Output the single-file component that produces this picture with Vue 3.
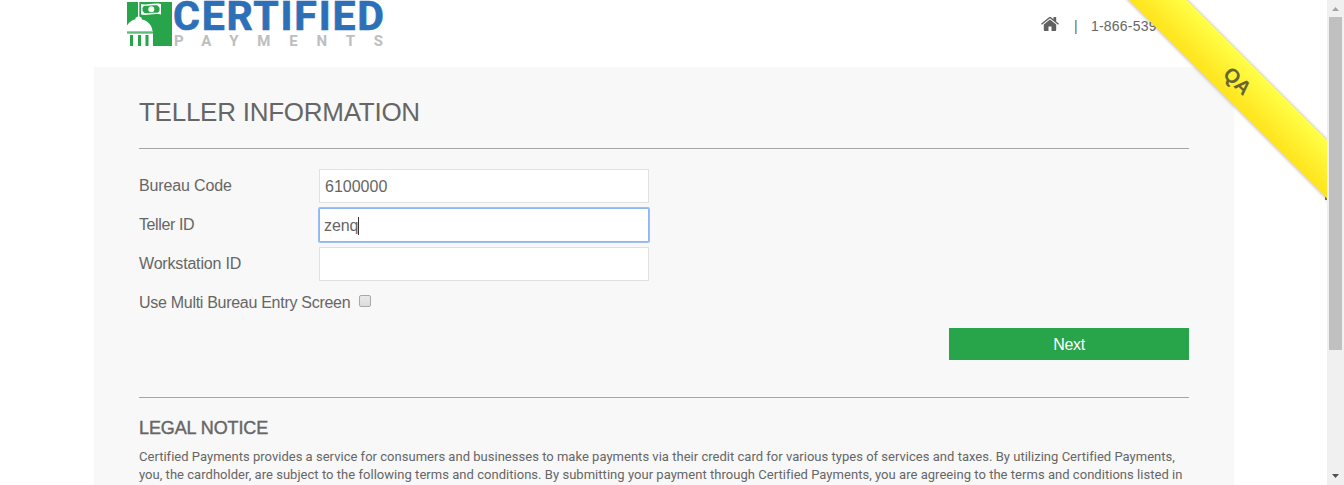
<script setup>
import { ref } from 'vue'

const fields = ref([
  { label: 'Bureau Code', value: '6100000', focused: false },
  { label: 'Teller ID', value: 'zenq', focused: true },
  { label: 'Workstation ID', value: '', focused: false },
])
</script>

<template>
  <div class="window">
    <div class="page">
      <header class="header">
        <svg class="logo" width="260" height="50" viewBox="0 0 260 50" aria-label="Certified Payments">
          <path fill="#28a44b" d="M1 2h45v44H1z" />
          <path fill="#fff" d="M1 31.500h26V46H1z" />
          <path fill="#28a44b" d="M1 32.200h26v1.300H1zM4 35h3v11H4zM12 35h3v11h-3zM19.500 35h3v11h-3z" />
          <path fill="#fff" d="M1 25.500C3 22 6 20 9.500 19.200v-1.400l2.500-1.300V2h1.300v14.500l2.300 1.300v1.400C21.500 20.500 26 25 26.500 31H1z" />
          <path fill="#fff" d="M15 4c6 1.500 12-1.500 20 0v10.500c-8-1.500-14 1.500-20 0z" />
          <path fill="#28a44b" d="M16.500 5.500c5 1 10-1 17 0V13c-7-1-12 1-17 0z" />
          <path fill="#fff" d="M16 5h3l-3 3zM31 5h3v3zM16 10.500v3h3zM34 10.500v3h-3z" />
          <circle cx="25.300" cy="9.200" r="3" fill="#fff" />
          <text class="brand" x="47" y="30" textLength="211">CERTIFIED</text>
          <text class="brand-sub" x="48" y="46" textLength="209">PAYMENTS</text>
        </svg>
        <div class="contact">
          <svg class="home" width="18" height="16" viewBox="0 0 18 16">
            <path fill="#606060" d="M9 3.400l6.200 5.200V14a1 1 0 0 1-1 1H10.500v-4.500h-3V15H3.800a1 1 0 0 1-1-1V8.600z" />
            <path fill="#606060" d="M0 7.800L8 1.200Q9 .4 10 1.200l2.500 2.100V1h2.700v4.500L18 7.800l-.9 1L9 2.200.9 8.800z" />
          </svg>
          <span class="divider">|</span>
          <span class="phone">1-866-539</span>
        </div>
      </header>

      <main class="panel">
        <h1>TELLER INFORMATION</h1>
        <form class="form" @submit.prevent>
          <div v-for="f in fields" :key="f.label" class="row">
            <label>{{ f.label }}</label>
            <div class="field" :class="{ focused: f.focused }"><span>{{ f.value }}</span><i v-if="f.focused" class="caret"></i></div>
          </div>
          <div class="row check">
            <label class="multi">Use Multi Bureau Entry Screen</label>
            <span class="box"></span>
          </div>
          <button class="next">Next</button>
        </form>
        <section class="legal">
          <h2>LEGAL NOTICE</h2>
          <p class="line first">Certified Payments provides a service for consumers and businesses to make payments via their credit card for various types of services and taxes. By utilizing Certified Payments,</p>
          <p class="line second">you, the cardholder, are subject to the following terms and conditions. By submitting your payment through Certified Payments, you are agreeing to the terms and conditions listed in</p>
        </section>
      </main>
      <div class="fold"></div>
      <div class="ribbon"><span>QA</span></div>
    </div>

    <aside class="scrollbar">
      <svg width="17" height="17"><path d="M5 11h7L8.500 7z" fill="#a3a3a3" /></svg>
      <div class="thumb"></div>
      <svg class="down" width="17" height="17"><path d="M5 6h7L8.500 10z" fill="#505050" /></svg>
    </aside>
  </div>
</template>

<style>
html, body { margin: 0; overflow: hidden; background: #fff; }
</style>

<style scoped>
* { box-sizing: border-box; }
.window {
  display: flex;
  width: 1344px;
  height: 485px;
  overflow: hidden;
  font-family: "Liberation Sans", Arial, sans-serif;
  color: #666;
}
.page { position: relative; width: 1327px; height: 485px; overflow: hidden; }
.header {
  display: flex;
  justify-content: space-between;
  height: 67px;
  margin-left: 94px;
  width: 1140px;
  padding-left: 32px;
}
.logo { overflow: visible; }
.brand { font-family: Roboto, sans-serif; font-size: 41px; font-weight: 700; fill: #2d70b7; stroke: #2d70b7; stroke-width: .7px; }
.brand-sub { font-family: Roboto, sans-serif; font-size: 15px; font-weight: 700; fill: #bcbec0; }
.contact { display: flex; align-items: flex-start; width: 193px; padding-top: 16px; font-size: 14px; }
.divider { margin: 1px 0 0 15px; width: 17px; line-height: 18px; }
.phone { line-height: 20px; letter-spacing: .2px; }
.panel {
  width: 1140px;
  height: 418px;
  margin-left: 94px;
  padding: 0 45px;
  background: #f8f8f8;
}
h1 {
  height: 82px;
  margin: 0;
  padding-top: 30px;
  border-bottom: 1px solid #a6a6a6;
  font-size: 26px;
  line-height: 31px;
  font-weight: 400;
  letter-spacing: -.26px;
  white-space: nowrap;
}
.form { display: flex; flex-direction: column; height: 248px; padding-top: 20px; }
.row { display: flex; height: 34px; margin-bottom: 5px; font-size: 16px; }
.row label { width: 180px; line-height: 33px; white-space: nowrap; letter-spacing: -.25px; }
.row:first-child label { letter-spacing: -.15px; }
.row:nth-child(2) label { letter-spacing: -.4px; }
.row:nth-child(3) label { letter-spacing: -.18px; }
.field {
  display: flex;
  align-items: center;
  width: 330px;
  height: 34px;
  padding: 1px 0 0 5px;
  border: 1px solid #e1e1e1;
  background: #fff;
}
.focused { padding-left: 4px; border-color: #8fb5f5; box-shadow: 0 0 0 1px #9dbff7; border-radius: 1px; }
.focused span { letter-spacing: -.1px; }
.caret { width: 1px; height: 18px; background: #333; }
.row .multi { width: 220px; letter-spacing: -.29px; }
.box {
  width: 12px;
  height: 12px;
  margin-top: 9px;
  border: 1px solid #a9a9a9;
  border-radius: 2px;
  background: linear-gradient(#e9e9e9, #dcdcdc);
}
.next {
  align-self: flex-end;
  width: 240px;
  height: 32px;
  margin-top: 3px;
  padding: 0;
  border: 0;
  background: #28a44b;
  color: #fff;
  font: 16px/34px "Liberation Sans", Arial, sans-serif;
  letter-spacing: -.3px;
}
.legal { border-top: 1px solid #a6a6a6; padding-top: 19px; }
h2 {
  margin: 0 0 9px;
  font-size: 18px;
  line-height: 22px;
  font-weight: 400;
  letter-spacing: -.1px;
  -webkit-text-stroke: .4px #666;
}
.line {
  margin: 0;
  font-family: Roboto, sans-serif;
  font-size: 13px;
  line-height: 18px;
  letter-spacing: .035px;
  white-space: nowrap;
}
.first { letter-spacing: .02px; }
.fold { position: absolute; left: 1325px; top: 196px; width: 2px; height: 4px; background: #6b8e10; }
.ribbon {
  position: absolute;
  left: 1037.500px;
  top: 59.500px;
  width: 400px;
  height: 41px;
  transform: rotate(45deg);
  background: linear-gradient(#ffff47, #ffe31c);
  box-shadow: 0 0 4px rgba(0, 0, 0, .35);
  text-align: center;
  font-size: 20px;
  line-height: 43px;
  font-weight: 700;
  color: #666633;
}
.scrollbar {
  display: flex;
  flex-direction: column;
  width: 17px;
  height: 485px;
  background: #f0f0f0;
}
.scrollbar svg { flex: none; }
.thumb { width: 13px; height: 333px; margin-left: 2px; background: #c0c0c0; }
.down { margin-top: auto; }
</style>
